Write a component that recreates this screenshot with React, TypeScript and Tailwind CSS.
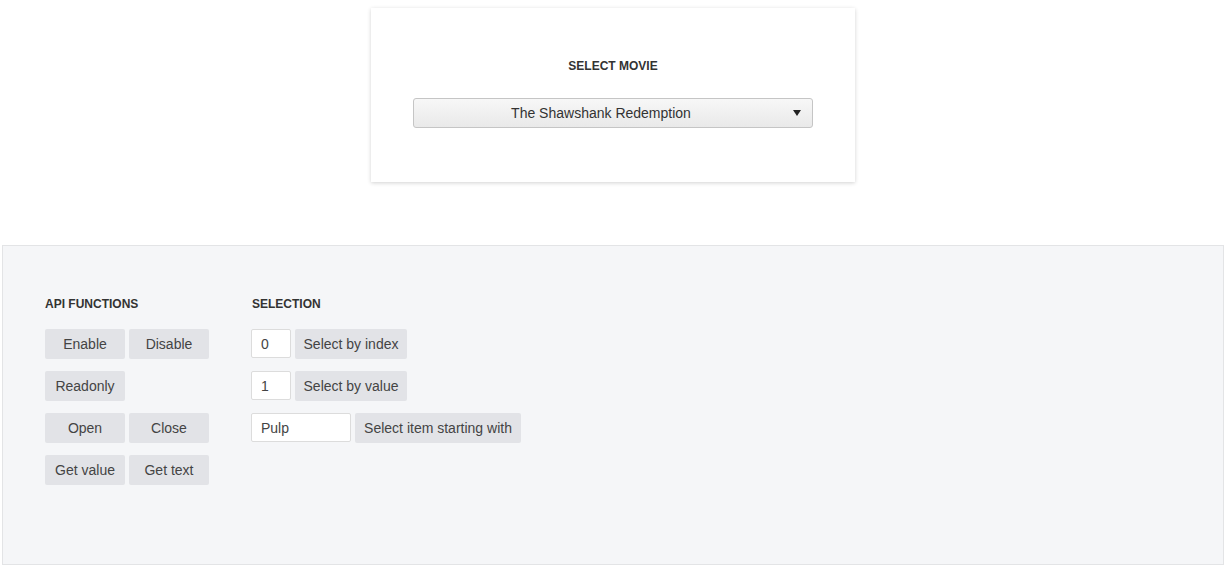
import React from "react";

const font = { fontFamily: '"Liberation Sans", Arial, sans-serif' };

function Btn({ children, w }: { children: React.ReactNode; w: string }) {
  return (
    <button
      className={`h-[30px] ${w} rounded-[2px] bg-[#e2e3e7] text-[14px] text-[#444] leading-[30px] text-center px-2 whitespace-nowrap`}
    >
      {children}
    </button>
  );
}

function Input({ value, w }: { value: string; w: string }) {
  return (
    <input
      readOnly
      value={value}
      className={`h-[29px] ${w} rounded-[2px] border border-[#dcdcdc] bg-white px-[9px] text-[14px] text-[#444] outline-none`}
    />
  );
}

export default function App() {
  return (
    <div className="w-[1226px] bg-white pt-[8px] pb-[10px]" style={font}>
      <div className="mx-auto w-[484px] h-[174px] bg-white shadow-[0_1px_4px_rgba(0,0,0,0.18)] pt-[50px] flex flex-col items-center">
        <div className="text-[12px] font-bold text-[#333] leading-[16px]">
          SELECT MOVIE
        </div>
        <div className="mt-[24px] w-[400px] h-[30px] rounded-[3px] border border-[#c5c5c5] bg-gradient-to-b from-[#f7f7f7] to-[#e9e9e9] flex items-center">
          <div className="flex-1 text-center text-[14px] text-[#333] pl-[4px]">
            The Shawshank Redemption
          </div>
          <div className="w-[28px] flex justify-center pr-[2px]">
            <svg width="8" height="6" viewBox="0 0 8 6">
              <path d="M0 0 L8 0 L4 6 Z" fill="#222" />
            </svg>
          </div>
        </div>
      </div>

      <div className="mx-[2px] mt-[63px] h-[320px] border border-[#e3e4e6] bg-[#f5f6f8] pt-[50px] pl-[42px] flex gap-[42px]">
        <div className="flex flex-col">
          <div className="text-[12px] font-bold text-[#333] leading-[16px] mb-[17px]">
            API FUNCTIONS
          </div>
          <div className="flex flex-col gap-[12px]">
            <div className="flex gap-[4px]">
              <Btn w="w-[80px]">Enable</Btn>
              <Btn w="w-[80px]">Disable</Btn>
            </div>
            <div className="flex gap-[4px]">
              <Btn w="w-[80px]">Readonly</Btn>
            </div>
            <div className="flex gap-[4px]">
              <Btn w="w-[80px]">Open</Btn>
              <Btn w="w-[80px]">Close</Btn>
            </div>
            <div className="flex gap-[4px]">
              <Btn w="w-[80px]">Get value</Btn>
              <Btn w="w-[80px]">Get text</Btn>
            </div>
          </div>
        </div>
        <div className="flex flex-col">
          <div className="text-[12px] font-bold text-[#333] leading-[16px] mb-[17px] pl-[1px]">
            SELECTION
          </div>
          <div className="flex flex-col gap-[12px]">
            <div className="flex gap-[4px] items-start">
              <Input value="0" w="w-[40px]" />
              <Btn w="w-[112px]">Select by index</Btn>
            </div>
            <div className="flex gap-[4px] items-start">
              <Input value="1" w="w-[40px]" />
              <Btn w="w-[112px]">Select by value</Btn>
            </div>
            <div className="flex gap-[4px] items-start">
              <Input value="Pulp" w="w-[100px]" />
              <Btn w="w-[166px]">Select item starting with</Btn>
            </div>
          </div>
        </div>
      </div>
    </div>
  );
}
